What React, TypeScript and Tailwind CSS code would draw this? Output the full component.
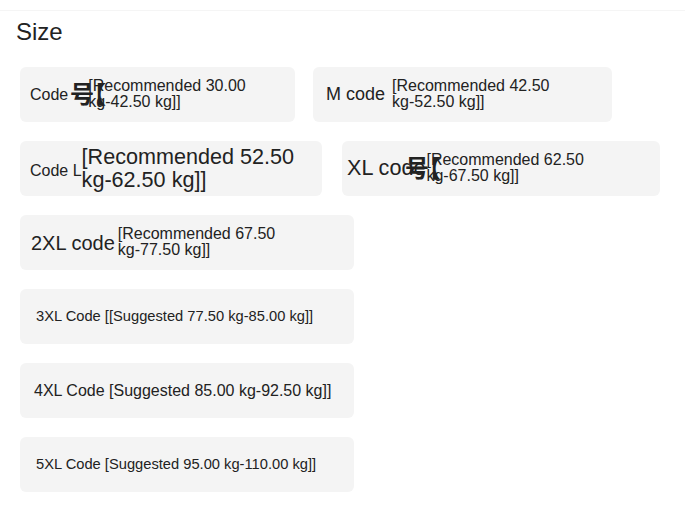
const card = "relative flex items-center rounded-md bg-[#f4f4f4] h-[55px] text-[#222]";

function Garble({ left }: { left: number }) {
  return (
    <span
      className="absolute top-1/2 -translate-y-1/2 flex items-center leading-none font-bold text-[24px] text-[#222]"
      style={{ left }}
    >
      <span>号</span>
      <span className="-ml-[12px]">【</span>
    </span>
  );
}

export default function App() {
  return (
    <div
      className="w-[685px] h-[509px] bg-white overflow-hidden"
      style={{ fontFamily: '"Liberation Sans", "Noto Sans CJK SC", sans-serif' }}
    >
      <div className="h-[11px] border-b border-[#f5f5f5]" />
      <div className="px-[16px] pt-[6px] text-[24px] leading-[30px] text-[#222]">Size</div>

      <div className="flex flex-col gap-[19px] pl-[20px] pt-[20px]">
        <div className="flex gap-[18px]">
          <div className={`${card} w-[275px] pl-[10px]`}>
            <span className="text-[16px]">Code</span>
            <Garble left={50} />
            <span className="ml-[20px] text-[16px] leading-[16px] -mt-[2px]">
              [Recommended 30.00
              <br />
              kg-42.50 kg]]
            </span>
          </div>
          <div className={`${card} w-[299px] pl-[13px]`}>
            <span className="text-[18px] mr-[7px]">M code</span>
            <span className="text-[16px] leading-[16px] -mt-[2px]">
              [Recommended 42.50
              <br />
              kg-52.50 kg]]
            </span>
          </div>
        </div>

        <div className="flex gap-[20px]">
          <div className={`${card} w-[302px] pl-[10px]`}>
            <span className="text-[16px] mt-[4px]">Code L</span>
            <span className="text-[21.6px] leading-[23px] -mt-[2px]">
              [Recommended 52.50
              <br />
              kg-62.50 kg]]
            </span>
          </div>
          <div className={`${card} w-[318px] pl-[5px]`}>
            <span className="text-[21.6px]">XL code</span>
            <Garble left={63} />
            <span className="ml-[1px] text-[16px] leading-[16px] -mt-[2px]">
              [Recommended 62.50
              <br />
              kg-67.50 kg]]
            </span>
          </div>
        </div>

        <div className={`${card} w-[334px] pl-[11px]`}>
          <span className="text-[20px] mr-[3px]">2XL code</span>
          <span className="text-[16px] leading-[16px] -mt-[2px]">
            [Recommended 67.50
            <br />
            kg-77.50 kg]]
          </span>
        </div>

        <div className={`${card} w-[334px] pl-[16px]`}>
          <span className="text-[14.7px]">3XL Code [[Suggested 77.50 kg-85.00 kg]]</span>
        </div>

        <div className={`${card} w-[334px] pl-[14px]`}>
          <span className="text-[16px]">4XL Code [Suggested 85.00 kg-92.50 kg]]</span>
        </div>

        <div className={`${card} w-[334px] pl-[16px]`}>
          <span className="text-[14.7px]">5XL Code [Suggested 95.00 kg-110.00 kg]]</span>
        </div>
      </div>
    </div>
  );
}
